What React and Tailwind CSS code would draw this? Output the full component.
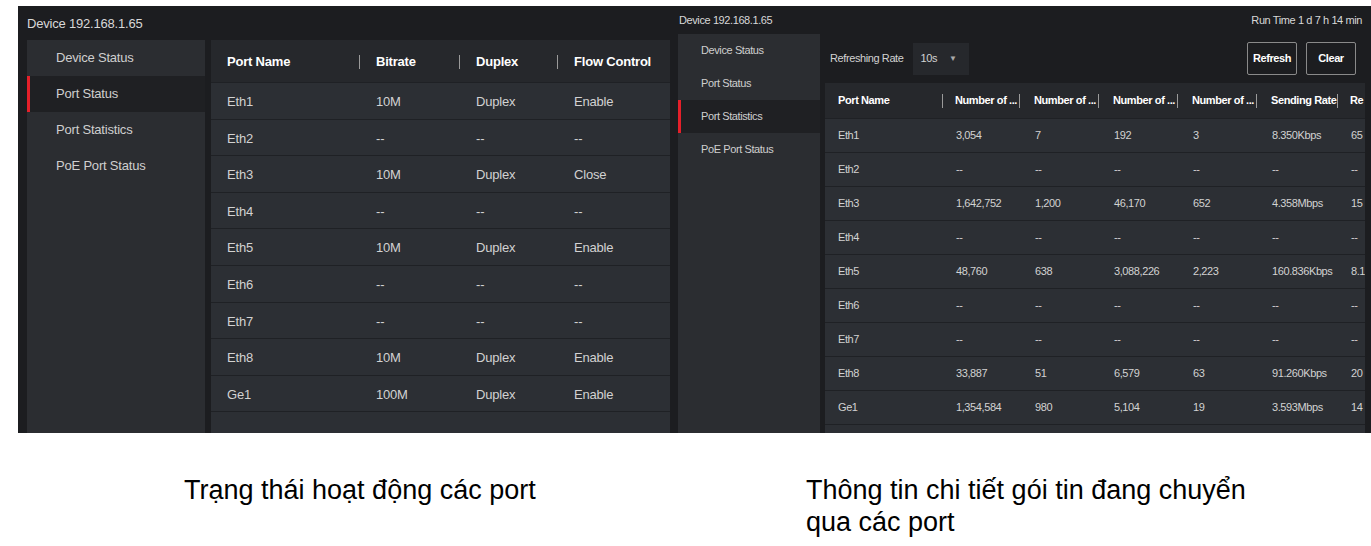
import React from 'react';

const ui = { fontFamily: '"Liberation Sans", Arial, sans-serif' };

const leftMenu = ['Device Status', 'Port Status', 'Port Statistics', 'PoE Port Status'];

const portStatus = [
    ['Eth1', '10M', 'Duplex', 'Enable'],
    ['Eth2', '--', '--', '--'],
    ['Eth3', '10M', 'Duplex', 'Close'],
    ['Eth4', '--', '--', '--'],
    ['Eth5', '10M', 'Duplex', 'Enable'],
    ['Eth6', '--', '--', '--'],
    ['Eth7', '--', '--', '--'],
    ['Eth8', '10M', 'Duplex', 'Enable'],
    ['Ge1', '100M', 'Duplex', 'Enable'],
];

const portStats = [
    ['Eth1', '3,054', '7', '192', '3', '8.350Kbps', '65'],
    ['Eth2', '--', '--', '--', '--', '--', '--'],
    ['Eth3', '1,642,752', '1,200', '46,170', '652', '4.358Mbps', '15'],
    ['Eth4', '--', '--', '--', '--', '--', '--'],
    ['Eth5', '48,760', '638', '3,088,226', '2,223', '160.836Kbps', '8.1'],
    ['Eth6', '--', '--', '--', '--', '--', '--'],
    ['Eth7', '--', '--', '--', '--', '--', '--'],
    ['Eth8', '33,887', '51', '6,579', '63', '91.260Kbps', '20'],
    ['Ge1', '1,354,584', '980', '5,104', '19', '3.593Mbps', '14'],
];

const leftCols = ['w-[149px]', 'w-[100px]', 'w-[98px]', 'flex-1'];
const rightCols = ['w-[118px]', 'w-[79px]', 'w-[79px]', 'w-[79px]', 'w-[79px]', 'w-[79px]', 'w-[27px]'];

function Sep() {
    return <span className="ml-auto h-[14px] w-px shrink-0 bg-[#9a9a9a]" />;
}

// Ảnh 1: Port Status
function PortStatusShot() {
    return (
        <div className="flex h-[427px] w-[654px] flex-col bg-[#1c1d20] tracking-[-0.2px]" style={ui}>
            <div className="flex h-[34px] items-center pl-[9px] pt-[2px] text-[13px] text-[#d8d8d8]">Device 192.168.1.65</div>
            <div className="flex flex-1 pl-[9px]">
                <div className="flex w-[178px] flex-col bg-[#2b2d31]">
                    {leftMenu.map((m, i) => (
                        <div
                            key={m}
                            className={`flex h-[36px] items-center text-[13px] text-[#cfcfcf] ${i === 1 ? 'border-l-[3px] border-[#e5202a] bg-[#1f2023] pl-[26px]' : 'pl-[29px]'}`}
                        >
                            {m}
                        </div>
                    ))}
                </div>
                <div className="ml-[6px] flex w-[459px] flex-col bg-[#2c2f34]">
                    <div className="flex h-[43px] items-center border-b border-[#1f2125] bg-[#26282c] pt-[2px] text-[13px] font-bold text-white">
                        {['Port Name', 'Bitrate', 'Duplex', 'Flow Control'].map((h, i) => (
                            <div key={h} className={`flex items-center pl-[16px] ${leftCols[i]}`}>
                                {h}
                                {i < 3 && <Sep />}
                            </div>
                        ))}
                    </div>
                    {portStatus.map((r) => (
                        <div key={r[0]} className="flex h-[36.6px] items-center border-b border-[#1f2125] pt-[2px] text-[13px] text-[#d2d2d2]">
                            {r.map((c, i) => (
                                <div key={i} className={`pl-[16px] ${leftCols[i]}`}>{c}</div>
                            ))}
                        </div>
                    ))}
                </div>
            </div>
        </div>
    );
}

// Ảnh 2: Port Statistics
function PortStatsShot() {
    return (
        <div className="flex h-[427px] w-[699px] flex-col bg-[#1c1d20] tracking-[-0.4px]" style={ui}>
            <div className="flex h-[28px] items-center justify-between pl-[7px] pr-[9px] text-[11px] text-[#d8d8d8]">
                <span>Device 192.168.1.65</span>
                <span>Run Time 1 d 7 h 14 min</span>
            </div>
            <div className="flex flex-1 pl-[6px]">
                <div className="flex w-[142px] flex-col bg-[#2b2d31]">
                    {leftMenu.map((m, i) => (
                        <div
                            key={m}
                            className={`flex h-[33px] items-center text-[11px] text-[#cfcfcf] ${i === 2 ? 'border-l-[3px] border-[#e5202a] bg-[#1f2023] pl-[20px]' : 'pl-[23px]'}`}
                        >
                            {m}
                        </div>
                    ))}
                </div>
                <div className="ml-[5px] flex w-[540px] flex-col">
                    <div className="flex h-[49px] items-center pl-[5px] text-[11px] text-[#d2d2d2]">
                        <span>Refreshing Rate</span>
                        <div className="ml-[9px] flex h-[32px] w-[56px] items-center gap-[12px] bg-[#26282c] pl-[8px]">
                            <span>10s</span>
                            <span className="text-[8px] text-[#aaa]">▼</span>
                        </div>
                        <button className="ml-auto flex h-[33px] w-[50px] items-center justify-center rounded-[2px] border border-[#8a8a8a] font-bold text-white">Refresh</button>
                        <button className="ml-[9px] mr-[9px] flex h-[33px] w-[50px] items-center justify-center rounded-[2px] border border-[#8a8a8a] font-bold text-white">Clear</button>
                    </div>
                    <div className="flex flex-1 flex-col overflow-hidden bg-[#2c2f34]">
                        <div className="flex h-[36px] shrink-0 items-center border-b border-[#1f2125] bg-[#26282c] text-[11px] font-bold text-white">
                            {['Port Name', 'Number of ...', 'Number of ...', 'Number of ...', 'Number of ...', 'Sending Rate', 'Re'].map((h, i) => (
                                <div key={i} className={`flex shrink-0 items-center whitespace-nowrap ${i === 0 ? 'pl-[13px]' : 'pl-[12px] pr-[2px]'} ${rightCols[i]}`}>
                                    {h}
                                    {i < 6 && <Sep />}
                                </div>
                            ))}
                        </div>
                        {portStats.map((r) => (
                            <div key={r[0]} className="flex h-[34px] shrink-0 items-center border-b border-[#1f2125] text-[11px] text-[#d2d2d2]">
                                {r.map((c, i) => (
                                    <div key={i} className={`shrink-0 overflow-hidden pl-[13px] whitespace-nowrap ${rightCols[i]}`}>{c}</div>
                                ))}
                            </div>
                        ))}
                    </div>
                </div>
            </div>
        </div>
    );
}

export default function App() {
    return (
        <div className="h-[546px] w-[1371px] overflow-hidden bg-white pt-[6px]">
            <div className="flex pl-[18px]">
                <PortStatusShot />
                <PortStatsShot />
            </div>

            {/* chú thích dưới ảnh */}
            <div className="mt-[41px] flex pl-[184px] text-[27px] leading-[32px] text-black" style={ui}>
                <div className="w-[622px]">Trạng thái hoạt động các port</div>
                <div>
                    Thông tin chi tiết gói tin đang chuyển
                    <br />
                    qua các port
                </div>
            </div>
        </div>
    );
}
